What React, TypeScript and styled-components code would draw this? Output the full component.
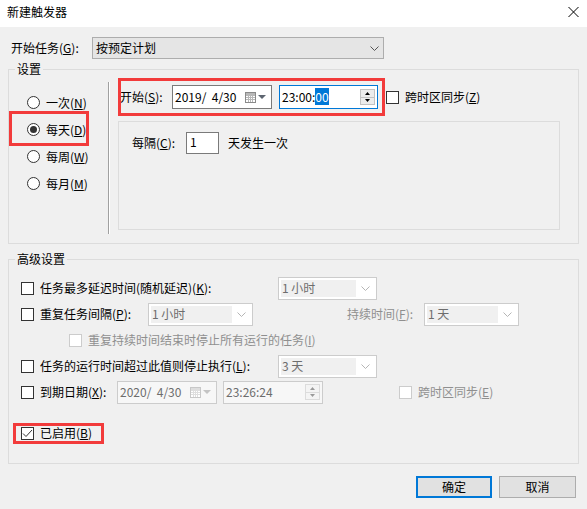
import React from "react";
import styled, { createGlobalStyle } from "styled-components";

const GlobalStyle = createGlobalStyle`
  html, body { margin: 0; padding: 0; background: #f0f0f0; }
  body {
    font-family: "Noto Sans CJK SC", "Noto Sans", sans-serif;
    font-size: 12px;
    color: #000;
  }
  * { box-sizing: border-box; }
`;

const Window = styled.div`
  width: 587px;
  height: 509px;
  background: #f0f0f0;
  display: flex;
  flex-direction: column;
  overflow: hidden;
`;

const TitleBar = styled.div`
  height: 27px;
  flex: none;
  background: #fff;
  display: flex;
  justify-content: space-between;
  align-items: flex-start;
  padding: 4px 8px 0 7px;
  line-height: 16px;
`;

const CloseIcon = styled.svg`
  margin-top: 3px;
  display: block;
`;

const Body = styled.div`
  padding: 10px 8px 0;
  display: flex;
  flex-direction: column;
`;

const Row = styled.div<{ $h?: number; $mt?: number }>`
  display: flex;
  align-items: center;
  height: ${(p) => p.$h ?? 26}px;
  margin-top: ${(p) => p.$mt ?? 0}px;
  white-space: nowrap;
`;

const Text = styled.span<{ $w?: number; $ml?: number; $pl?: number; $disabled?: boolean }>`
  display: inline-block;
  flex: none;
  line-height: 16px;
  width: ${(p) => (p.$w ? `${p.$w}px` : "auto")};
  margin-left: ${(p) => p.$ml ?? 0}px;
  padding-left: ${(p) => p.$pl ?? 0}px;
  color: ${(p) => (p.$disabled ? "#8f8f8f" : "#000")};
`;

const Mn = styled.span`
  text-decoration: underline;
  text-underline-offset: 1px;
  text-decoration-thickness: 1px;
`;

const Combo = styled.div<{ $w: number; $h?: number; $disabled?: boolean }>`
  flex: none;
  width: ${(p) => p.$w}px;
  height: ${(p) => p.$h ?? 23}px;
  display: flex;
  align-items: stretch;
  border: 1px solid ${(p) => (p.$disabled ? "#cccccc" : "#adadad")};
  background: ${(p) => (p.$disabled ? "#ffffff" : "#e5e5e5")};
  padding: ${(p) => (p.$disabled ? "2px" : "0")};
`;

const ComboText = styled.span<{ $disabled?: boolean }>`
  flex: 1;
  display: flex;
  align-items: center;
  padding-left: ${(p) => (p.$disabled ? 1 : 3)}px;
  background: ${(p) => (p.$disabled ? "#f0f0f0" : "transparent")};
  color: ${(p) => (p.$disabled ? "#6d6d6d" : "#000")};
  line-height: 16px;
`;

const ChevronBox = styled.span`
  flex: none;
  width: 18px;
  display: flex;
  align-items: center;
  justify-content: center;
`;

const Chevron = ({ color }: { color: string }) => (
  <svg width="9" height="5" viewBox="0 0 9 5">
    <polyline points="0.5,0.5 4.5,4.5 8.5,0.5" fill="none" stroke={color} strokeWidth="1" />
  </svg>
);

const GroupBox = styled.fieldset<{ $mt: number }>`
  margin: ${(p) => p.$mt}px 0 0;
  padding: 0;
  border: 1px solid #dcdcdc;
  min-width: 0;
`;

const Legend = styled.legend`
  margin-left: 6px;
  padding: 0 2px;
  line-height: 16px;
  font-size: 12px;
`;

const SettingsLayout = styled.div`
  display: flex;
  height: 166px;
`;

const RadioColumn = styled.div`
  width: 99px;
  flex: none;
  padding: 12px 0 0 18px;
  display: flex;
  flex-direction: column;
  align-items: flex-start;
`;

const RadioRow = styled.div`
  height: 27px;
  display: inline-flex;
  align-items: center;
  gap: 6px;
  white-space: nowrap;
`;

const RadioCircle = styled.span<{ $checked?: boolean }>`
  width: 13px;
  height: 13px;
  flex: none;
  border-radius: 50%;
  border: 1px solid #333;
  background: #fff;
  display: flex;
  align-items: center;
  justify-content: center;
  &::after {
    content: "";
    width: 7px;
    height: 7px;
    border-radius: 50%;
    background: ${(p) => (p.$checked ? "#333" : "transparent")};
  }
`;

const Separator = styled.div`
  width: 2px;
  flex: none;
  margin: 5px 0 9px;
  border-left: 1px solid #a0a0a0;
  border-right: 1px solid #ffffff;
`;

const RightColumn = styled.div`
  width: 442px;
  flex: none;
  margin-left: 8px;
  padding-top: 8px;
  display: flex;
  flex-direction: column;
`;

const Highlight = styled.div<{ $t: number; $r: number; $b: number; $l: number }>`
  position: relative;
  display: inline-flex;
  align-items: center;
  &::after {
    content: "";
    position: absolute;
    top: ${(p) => -p.$t}px;
    right: ${(p) => -p.$r}px;
    bottom: ${(p) => -p.$b}px;
    left: ${(p) => -p.$l}px;
    border: 3px solid #f23b3b;
    pointer-events: none;
  }
`;

const Field = styled.div<{ $w: number; $h: number; $disabled?: boolean; $focused?: boolean; $ml?: number }>`
  flex: none;
  width: ${(p) => p.$w}px;
  height: ${(p) => p.$h}px;
  margin-left: ${(p) => p.$ml ?? 0}px;
  display: flex;
  align-items: center;
  border: 1px solid ${(p) => (p.$focused ? "#0078d7" : p.$disabled ? "#cccccc" : "#7a7a7a")};
  background: ${(p) => (p.$disabled ? "#f7f7f7" : "#ffffff")};
  color: ${(p) => (p.$disabled ? "#6d6d6d" : "#000")};
  padding: 0 2px 0 2px;
  white-space: pre;
  line-height: 16px;
`;

const FieldValue = styled.span`
  flex: 1;
`;

const Selected = styled.span`
  background: #0078d7;
  color: #fff;
`;

const CalendarButton = styled.span`
  display: flex;
  align-items: center;
  gap: 2px;
  margin-right: 3px;
`;

const CalendarIcon = ({ disabled }: { disabled?: boolean }) => {
  const edge = disabled ? "#c8c8c8" : "#8a8a8a";
  const grid = disabled ? "#dedede" : "#b8b8b8";
  return (
    <svg width="11" height="11" viewBox="0 0 11 11">
      <rect x="0.5" y="0.5" width="10" height="10" fill="#fff" stroke={edge} />
      <rect x="1" y="1" width="9" height="2" fill={grid} />
      {[3.5, 5.5, 7.5].map((y) => (
        <line key={`h${y}`} x1="1" x2="10" y1={y} y2={y} stroke={grid} />
      ))}
      {[3.5, 5.5, 7.5].map((x) => (
        <line key={`v${x}`} x1={x} x2={x} y1="3" y2="10" stroke={grid} />
      ))}
    </svg>
  );
};

const DownTriangle = ({ color }: { color: string }) => (
  <svg width="8" height="4" viewBox="0 0 8 4">
    <polygon points="0,0 8,0 4,4" fill={color} />
  </svg>
);

const Spin = styled.span<{ $disabled?: boolean }>`
  flex: none;
  width: 15px;
  height: 16px;
  display: flex;
  flex-direction: column;
  gap: 0;
`;

const SpinHalf = styled.span<{ $disabled?: boolean }>`
  flex: 1;
  display: flex;
  align-items: center;
  justify-content: center;
  background: ${(p) => (p.$disabled ? "#f4f4f4" : "#ececec")};
  border: 1px solid ${(p) => (p.$disabled ? "#dcdcdc" : "#c2c2c2")};
  & + & { border-top: none; }
`;

const Arrow = ({ up, color }: { up?: boolean; color: string }) => (
  <svg width="5" height="3" viewBox="0 0 5 3">
    <polygon points={up ? "0,3 5,3 2.5,0" : "0,0 5,0 2.5,3"} fill={color} />
  </svg>
);

const SpinButtons = ({ disabled }: { disabled?: boolean }) => {
  const c = disabled ? "#9a9a9a" : "#000";
  return (
    <Spin>
      <SpinHalf $disabled={disabled}>
        <Arrow up color={c} />
      </SpinHalf>
      <SpinHalf $disabled={disabled}>
        <Arrow color={c} />
      </SpinHalf>
    </Spin>
  );
};

const Box = styled.span<{ $disabled?: boolean; $ml?: number }>`
  width: 13px;
  height: 13px;
  flex: none;
  margin-left: ${(p) => p.$ml ?? 0}px;
  margin-right: 6px;
  border: 1px solid ${(p) => (p.$disabled ? "#cccccc" : "#333333")};
  background: #fff;
  display: flex;
  align-items: center;
  justify-content: center;
`;

const CheckBox = ({ checked, disabled, ml }: { checked?: boolean; disabled?: boolean; ml?: number }) => (
  <Box $disabled={disabled} $ml={ml}>
    {checked && (
      <svg width="11" height="9" viewBox="0 0 11 9">
        <polyline points="1,4.5 4,7.5 10,1" fill="none" stroke="#333" strokeWidth="1" />
      </svg>
    )}
  </Box>
);

const IntervalBox = styled.div`
  margin-top: 12px;
  height: 109px;
  border: 1px solid #dcdcdc;
  padding: 10px 0 0 13px;
`;

const NumberInput = styled.div`
  width: 33px;
  height: 22px;
  flex: none;
  border: 1px solid #7a7a7a;
  background: #fff;
  padding: 1px 0 0 3px;
  line-height: 16px;
`;

const AdvancedContent = styled.div`
  padding: 8px 0 17px 12px;
  display: flex;
  flex-direction: column;
`;

const ButtonBar = styled.div`
  margin-top: 12px;
  display: flex;
  justify-content: flex-end;
  gap: 7px;
  padding-right: 3px;
`;

const Button = styled.button<{ $primary?: boolean; $w: number }>`
  width: ${(p) => p.$w}px;
  height: 22px;
  padding: 0;
  font: inherit;
  font-size: 12px;
  color: #000;
  background: #e1e1e1;
  border: ${(p) => (p.$primary ? "2px solid #0078d7" : "1px solid #adadad")};
  line-height: 16px;
`;

export default function App() {
  return (
    <>
      <GlobalStyle />
      <Window>
        <TitleBar>
          <span>新建触发器</span>
          <CloseIcon width="11" height="10" viewBox="0 0 11 10">
            <line x1="0.5" y1="0" x2="10.5" y2="10" stroke="#000" strokeWidth="1" />
            <line x1="10.5" y1="0" x2="0.5" y2="10" stroke="#000" strokeWidth="1" />
          </CloseIcon>
        </TitleBar>
        <Body>
          <Row $h={22}>
            <Text $w={84} $pl={3}>
              开始任务(<Mn>G</Mn>):
            </Text>
            <Combo $w={292} $h={22}>
              <ComboText>按预定计划</ComboText>
              <ChevronBox>
                <Chevron color="#555" />
              </ChevronBox>
            </Combo>
          </Row>

          <GroupBox $mt={2}>
            <Legend>设置</Legend>
            <SettingsLayout>
              <RadioColumn>
                <RadioRow>
                  <RadioCircle />
                  <span>
                    一次(<Mn>N</Mn>)
                  </span>
                </RadioRow>
                <Highlight $t={5} $r={3} $b={3} $l={18}>
                  <RadioRow>
                    <RadioCircle $checked />
                    <span>
                      每天(<Mn>D</Mn>)
                    </span>
                  </RadioRow>
                </Highlight>
                <RadioRow>
                  <RadioCircle />
                  <span>
                    每周(<Mn>W</Mn>)
                  </span>
                </RadioRow>
                <RadioRow>
                  <RadioCircle />
                  <span>
                    每月(<Mn>M</Mn>)
                  </span>
                </RadioRow>
              </RadioColumn>
              <Separator />
              <RightColumn>
                <Row $h={24}>
                  <Highlight $t={7} $r={7} $b={7} $l={0}>
                    <Text $w={54} $pl={2}>
                      开始(<Mn>S</Mn>):
                    </Text>
                    <Field $w={100} $h={24}>
                      <FieldValue>2019/  4/30</FieldValue>
                      <CalendarButton>
                        <CalendarIcon />
                        <DownTriangle color="#5d6570" />
                      </CalendarButton>
                    </Field>
                    <Field $w={99} $h={24} $ml={7} $focused>
                      <FieldValue>
                        23:00:<Selected>00</Selected>
                      </FieldValue>
                      <SpinButtons />
                    </Field>
                  </Highlight>
                  <Text $ml={8} />
                  <CheckBox />
                  <Text>
                    跨时区同步(<Mn>Z</Mn>)
                  </Text>
                </Row>
                <IntervalBox>
                  <Row $h={22}>
                    <Text $w={54}>
                      每隔(<Mn>C</Mn>):
                    </Text>
                    <NumberInput>1</NumberInput>
                    <Text $ml={9}>天发生一次</Text>
                  </Row>
                </IntervalBox>
              </RightColumn>
            </SettingsLayout>
          </GroupBox>

          <GroupBox $mt={7}>
            <Legend>高级设置</Legend>
            <AdvancedContent>
              <Row>
                <CheckBox />
                <Text $w={238}>
                  任务最多延迟时间(随机延迟)(<Mn>K</Mn>):
                </Text>
                <Combo $w={99} $disabled>
                  <ComboText $disabled>1 小时</ComboText>
                  <ChevronBox>
                    <Chevron color="#b5b5b5" />
                  </ChevronBox>
                </Combo>
              </Row>
              <Row>
                <CheckBox />
                <Text $w={108}>
                  重复任务间隔(<Mn>P</Mn>):
                </Text>
                <Combo $w={105} $disabled>
                  <ComboText $disabled>1 小时</ComboText>
                  <ChevronBox>
                    <Chevron color="#b5b5b5" />
                  </ChevronBox>
                </Combo>
                <Text $ml={94} $w={77} $disabled>
                  持续时间(<Mn>F</Mn>):
                </Text>
                <Combo $w={95} $disabled>
                  <ComboText $disabled>1 天</ComboText>
                  <ChevronBox>
                    <Chevron color="#b5b5b5" />
                  </ChevronBox>
                </Combo>
              </Row>
              <Row>
                <CheckBox disabled ml={48} />
                <Text $disabled>
                  重复持续时间结束时停止所有运行的任务(<Mn>I</Mn>)
                </Text>
              </Row>
              <Row>
                <CheckBox />
                <Text $w={238}>
                  任务的运行时间超过此值则停止执行(<Mn>L</Mn>):
                </Text>
                <Combo $w={99} $disabled>
                  <ComboText $disabled>3 天</ComboText>
                  <ChevronBox>
                    <Chevron color="#b5b5b5" />
                  </ChevronBox>
                </Combo>
              </Row>
              <Row>
                <CheckBox />
                <Text $w={77}>
                  到期日期(<Mn>X</Mn>):
                </Text>
                <Field $w={100} $h={23} $disabled>
                  <FieldValue>2020/  4/30</FieldValue>
                  <CalendarButton>
                    <CalendarIcon disabled />
                    <DownTriangle color="#c4c4c4" />
                  </CalendarButton>
                </Field>
                <Field $w={100} $h={23} $ml={6} $disabled>
                  <FieldValue>23:26:24</FieldValue>
                  <SpinButtons disabled />
                </Field>
                <CheckBox disabled ml={76} />
                <Text $disabled>
                  跨时区同步(<Mn>E</Mn>)
                </Text>
              </Row>
              <Row $mt={15}>
                <Highlight $t={2} $r={12} $b={3} $l={8}>
                  <CheckBox checked />
                  <Text>
                    已启用(<Mn>B</Mn>)
                  </Text>
                </Highlight>
              </Row>
            </AdvancedContent>
          </GroupBox>

          <ButtonBar>
            <Button $primary $w={76}>确定</Button>
            <Button $w={77}>取消</Button>
          </ButtonBar>
        </Body>
      </Window>
    </>
  );
}
